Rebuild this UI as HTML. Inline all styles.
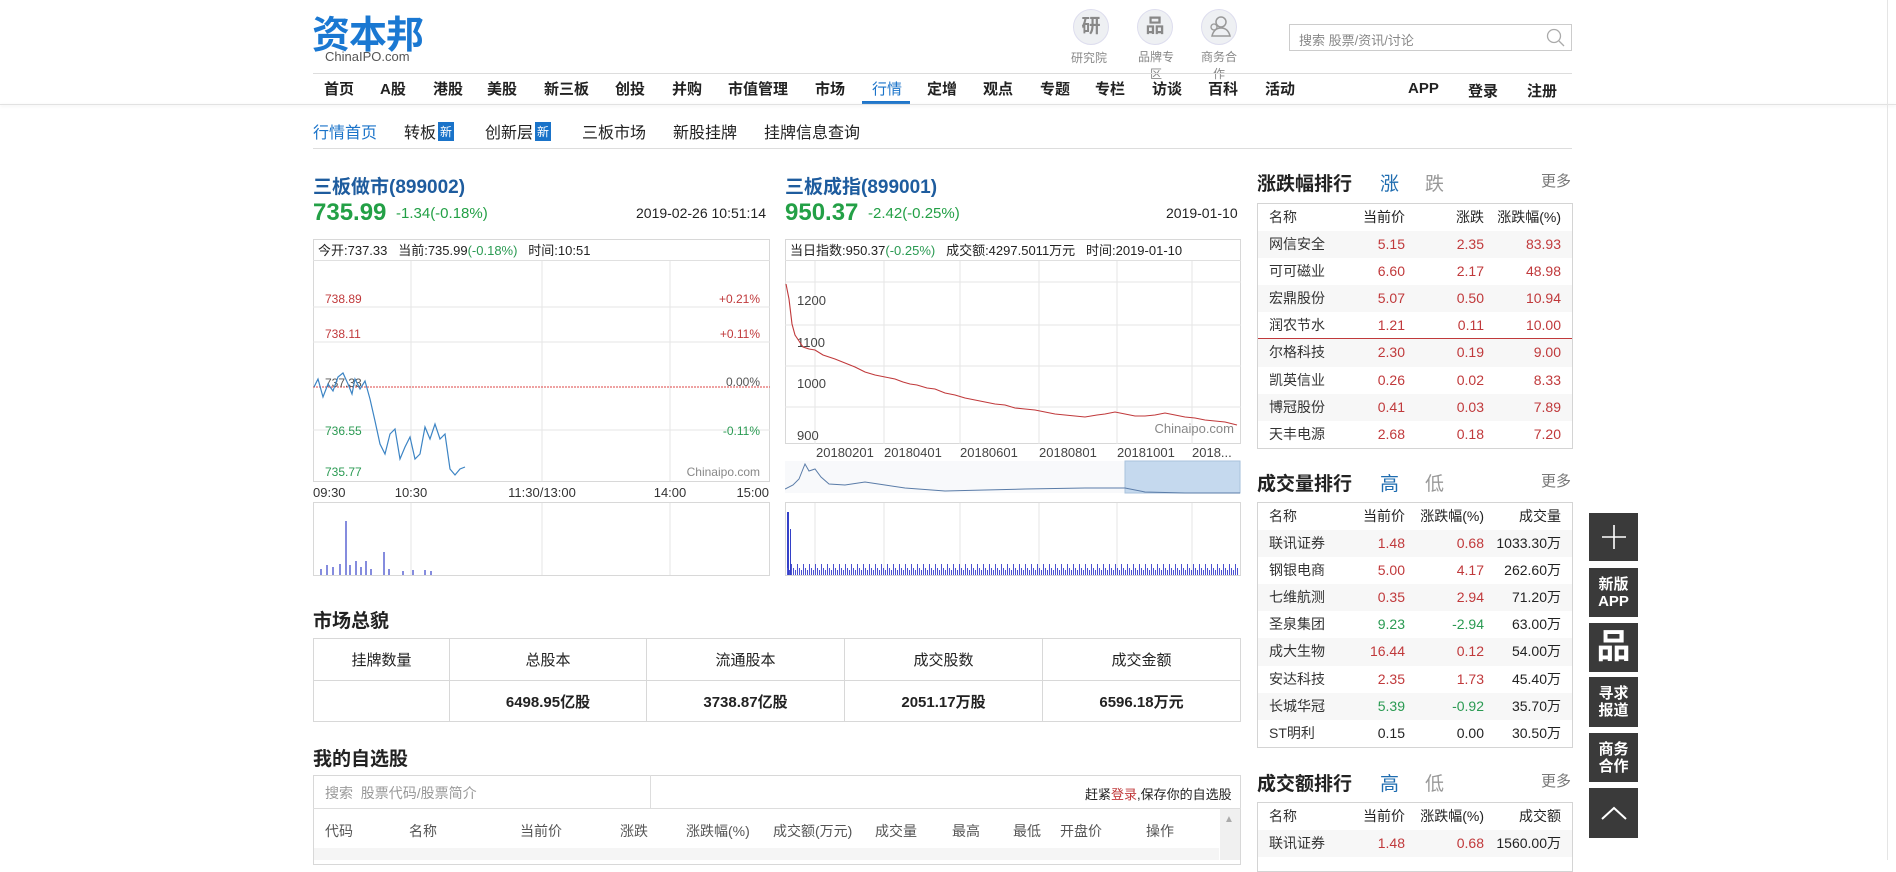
<!DOCTYPE html>
<html><head><meta charset="utf-8">
<style>
*{margin:0;padding:0;box-sizing:border-box}
body{width:1896px;height:860px;overflow:hidden;background:#fff;font-family:"Liberation Sans","Noto Sans CJK SC",sans-serif;color:#222;position:relative}
.a{position:absolute;white-space:nowrap}
.nav span{position:absolute;top:78px;font-size:15px;font-weight:bold;color:#222}
.sub span{position:absolute;top:119px;font-size:16px;color:#222}
.new{display:inline-block;background:#1a73c9;color:#fff;font-size:12px;padding:1px 2px;margin-left:2px;vertical-align:2px}
.box{position:absolute;border:1px solid #d8d8d8}
.rt{position:absolute;left:1257px;width:316px;border:1px solid #d4d4d4;font-size:14px}
.rt .r{height:27.1px;line-height:27px;position:relative}
.rt .r:nth-child(even){background:#f7f7f7}
.rt .r span{position:absolute}
.c1{left:11px;color:#333}.c2{right:167px}.c3{right:88px}.c4{right:11px}
.red{color:#c0393b}.grn{color:#2a9a52}
.rh{position:absolute;left:1257px;font-size:19px;font-weight:bold;color:#222}
.rh i{font-style:normal;font-weight:normal;margin-left:26px;color:#999}
.rh i.on{color:#1e6cb0;margin-left:28px}
.more{position:absolute;left:1541px;font-size:15px;color:#777}
.sb{position:absolute;left:1589px;width:49px;background:#3a3a3a;color:#fff;text-align:center;font-weight:bold;font-size:15px;line-height:17px}
.mt td{border:1px solid #d8d8d8;text-align:center;font-size:15px}
</style></head><body>

<div class="a" style="left:312px;top:4px;font-size:38px;font-weight:bold;color:#1a78d2;letter-spacing:-1px">资本邦</div>
<div class="a" style="left:325px;top:49px;font-size:13px;color:#555">ChinaIPO.com</div>

<div class="a" style="left:1073px;top:9px;width:36px;height:36px;border-radius:50%;background:#eef0f3;border:1px solid #dde;text-align:center;line-height:34px;font-size:19px;color:#888;font-weight:bold">研</div>
<div class="a" style="left:1137px;top:9px;width:36px;height:36px;border-radius:50%;background:#eef0f3;border:1px solid #dde;text-align:center;line-height:34px;font-size:19px;color:#888;font-weight:bold">品</div>
<div class="a" style="left:1201px;top:9px;width:36px;height:36px;border-radius:50%;background:#eef0f3;border:1px solid #dde"><svg width="34" height="34"><circle cx="19" cy="12" r="5" fill="none" stroke="#999" stroke-width="1.5"/><path d="M10 26 q2-8 9-8 q7 0 9 8 z" fill="none" stroke="#999" stroke-width="1.5"/><circle cx="12" cy="17" r="3" fill="none" stroke="#999" stroke-width="1.3"/></svg></div>
<div class="a" style="left:1071px;top:49px;font-size:12px;color:#888">研究院</div>
<div class="a" style="left:1136px;top:49px;font-size:12px;color:#888;width:40px;white-space:normal;line-height:17px;text-align:center">品牌专区</div>
<div class="a" style="left:1199px;top:49px;font-size:12px;color:#888;width:40px;white-space:normal;line-height:17px;text-align:center">商务合作</div>

<div class="a" style="left:1289px;top:24px;width:283px;height:27px;border:1px solid #ccc"></div>
<div class="a" style="left:1299px;top:30px;font-size:13px;color:#888">搜索 股票/资讯/讨论</div>
<svg class="a" style="left:1546px;top:28px" width="20" height="20"><circle cx="8" cy="8" r="6.5" fill="none" stroke="#aaa" stroke-width="1.3"/><line x1="13" y1="13" x2="18" y2="18" stroke="#aaa" stroke-width="1.3"/></svg>

<div class="a" style="left:313px;top:73px;width:1259px;height:1px;background:#ddd"></div>
<div class="nav">
<span style="left:324px">首页</span><span style="left:380px">A股</span><span style="left:433px">港股</span><span style="left:487px">美股</span><span style="left:544px">新三板</span><span style="left:615px">创投</span><span style="left:672px">并购</span><span style="left:728px">市值管理</span><span style="left:815px">市场</span><span style="left:872px;color:#1a73c9;font-weight:normal">行情</span><span style="left:927px">定增</span><span style="left:983px">观点</span><span style="left:1040px">专题</span><span style="left:1095px">专栏</span><span style="left:1152px">访谈</span><span style="left:1208px">百科</span><span style="left:1265px">活动</span>
<span style="left:1408px;top:80px">APP</span><span style="left:1468px;top:80px">登录</span><span style="left:1527px;top:80px">注册</span>
</div>
<div class="a" style="left:862px;top:101px;width:48px;height:3px;background:#1a73c9"></div>
<div class="a" style="left:0;top:104px;width:1896px;height:1px;background:#e2e2e2;box-shadow:0 1px 3px #e6e6e6"></div>

<div class="sub">
<span style="left:313px;color:#1a73c9">行情首页</span><span style="left:404px">转板<i class="new" style="font-style:normal">新</i></span><span style="left:485px">创新层<i class="new" style="font-style:normal">新</i></span><span style="left:582px">三板市场</span><span style="left:673px">新股挂牌</span><span style="left:764px">挂牌信息查询</span>
</div>
<div class="a" style="left:313px;top:148px;width:1259px;height:1px;background:#ddd"></div>

<div class="a" style="left:313px;top:172px;font-size:19px;color:#1e5c9e;font-weight:bold">三板做市(899002)</div>
<div class="a" style="left:313px;top:199px;font-size:24px;color:#23a046;font-weight:bold">735.99</div>
<div class="a" style="left:396px;top:205px;font-size:15px;color:#23a046">-1.34(-0.18%)</div>
<div class="a" style="left:636px;top:205px;font-size:14px;color:#222">2019-02-26 10:51:14</div>

<div class="a" style="left:785px;top:172px;font-size:19px;color:#1e5c9e;font-weight:bold">三板成指(899001)</div>
<div class="a" style="left:785px;top:199px;font-size:24px;color:#23a046;font-weight:bold">950.37</div>
<div class="a" style="left:868px;top:205px;font-size:15px;color:#23a046">-2.42(-0.25%)</div>
<div class="a" style="left:1166px;top:205px;font-size:14px;color:#222">2019-01-10</div>

<svg class="a" style="left:313px;top:239px" width="457" height="337">
<rect x="0.5" y="0.5" width="456" height="242" fill="#fff" stroke="#d8d8d8"/>
<line x1="0" y1="21.5" x2="457" y2="21.5" stroke="#e0e0e0"/>
<g stroke="#e6e6e6"><line x1="0" y1="68" x2="457" y2="68"/><line x1="0" y1="103" x2="457" y2="103"/><line x1="0" y1="191" x2="457" y2="191"/><line x1="98" y1="22" x2="98" y2="242"/><line x1="229" y1="22" x2="229" y2="242"/><line x1="357" y1="22" x2="357" y2="242"/></g>
<line x1="0" y1="148" x2="457" y2="148" stroke="#d44" stroke-dasharray="2,1"/>
<g font-size="12" font-family="Liberation Sans,sans-serif">
<text x="12" y="64" fill="#c0393b">738.89</text><text x="12" y="99" fill="#c0393b">738.11</text><text x="12" y="148" fill="#555">737.33</text><text x="12" y="196" fill="#2a9a52">736.55</text><text x="12" y="237" fill="#2a9a52">735.77</text>
<text x="447" y="64" fill="#c0393b" text-anchor="end">+0.21%</text><text x="447" y="99" fill="#c0393b" text-anchor="end">+0.11%</text><text x="447" y="147" fill="#555" text-anchor="end">0.00%</text><text x="447" y="196" fill="#2a9a52" text-anchor="end">-0.11%</text><text x="447" y="237" fill="#888" text-anchor="end">Chinaipo.com</text>
</g>
<text x="5" y="16" font-size="13" fill="#222" font-family="Liberation Sans,Noto Sans CJK SC,sans-serif">今开:737.33 &#160; 当前:735.99<tspan fill="#2a9a52">(-0.18%)</tspan> &#160; 时间:10:51</text>
<polyline fill="none" stroke="#3c84c4" stroke-width="1.2" points="1,148 5,140 10,158 15,145 20,152 25,138 30,134 35,145 39,155 42,140 47,150 52,142 57,160 62,182 67,205 72,215 77,195 82,190 87,220 92,208 97,198 102,220 107,215 112,188 117,200 122,185 127,200 132,195 137,230 142,236 147,230 152,228"/>
<g font-size="13" fill="#333" font-family="Liberation Sans,sans-serif"><text x="0" y="258">09:30</text><text x="98" y="258" text-anchor="middle">10:30</text><text x="229" y="258" text-anchor="middle">11:30/13:00</text><text x="357" y="258" text-anchor="middle">14:00</text><text x="456" y="258" text-anchor="end">15:00</text></g>
<rect x="0.5" y="263.5" width="456" height="73" fill="#fff" stroke="#d8d8d8"/>
<g stroke="#e6e6e6"><line x1="98" y1="264" x2="98" y2="336"/><line x1="229" y1="264" x2="229" y2="336"/><line x1="357" y1="264" x2="357" y2="336"/></g>
<g stroke="#3340c8" stroke-width="1.2"><line x1="8" y1="336" x2="8" y2="330"/><line x1="14" y1="336" x2="14" y2="326"/><line x1="20" y1="336" x2="20" y2="328"/><line x1="27" y1="336" x2="27" y2="325"/><line x1="33" y1="336" x2="33" y2="282"/><line x1="37" y1="336" x2="37" y2="326"/><line x1="43" y1="336" x2="43" y2="322"/><line x1="48" y1="336" x2="48" y2="328"/><line x1="53" y1="336" x2="53" y2="322"/><line x1="58" y1="336" x2="58" y2="330"/><line x1="71" y1="336" x2="71" y2="313"/><line x1="76" y1="336" x2="76" y2="330"/><line x1="90" y1="336" x2="90" y2="332"/><line x1="100" y1="336" x2="100" y2="331"/><line x1="112" y1="336" x2="112" y2="331"/><line x1="118" y1="336" x2="118" y2="332"/></g>
</svg>

<svg class="a" style="left:785px;top:239px" width="456" height="337">
<defs><pattern id="vb" width="6" height="14" patternUnits="userSpaceOnUse"><rect x="0" y="3" width="1" height="11" fill="#4a50d0"/><rect x="2" y="7" width="1" height="7" fill="#4a50d0"/><rect x="4" y="9" width="1" height="5" fill="#4a50d0"/></pattern></defs>
<rect x="0.5" y="0.5" width="455" height="204" fill="#fff" stroke="#d8d8d8"/>
<line x1="0" y1="21.5" x2="456" y2="21.5" stroke="#e0e0e0"/>
<g stroke="#e6e6e6"><line x1="0" y1="43" x2="456" y2="43"/><line x1="0" y1="86" x2="456" y2="86"/><line x1="0" y1="127" x2="456" y2="127"/><line x1="0" y1="168" x2="456" y2="168"/><line x1="30" y1="22" x2="30" y2="205"/><line x1="99" y1="22" x2="99" y2="205"/><line x1="175" y1="22" x2="175" y2="205"/><line x1="254" y1="22" x2="254" y2="205"/><line x1="332" y1="22" x2="332" y2="205"/><line x1="407" y1="22" x2="407" y2="205"/></g>
<text x="5" y="16" font-size="13" fill="#222" font-family="Liberation Sans,Noto Sans CJK SC,sans-serif">当日指数:950.37<tspan fill="#2a9a52">(-0.25%)</tspan> &#160; 成交额:4297.5011万元 &#160; 时间:2019-01-10</text>
<g font-size="13" fill="#444" font-family="Liberation Sans,sans-serif"><text x="12" y="66">1200</text><text x="12" y="108">1100</text><text x="12" y="149">1000</text><text x="12" y="201">900</text><text x="449" y="194" text-anchor="end" fill="#888">Chinaipo.com</text></g>
<polyline fill="none" stroke="#c0393b" stroke-width="1.1" points="1,45 4,60 7,85 10,96 14,102 18,108 24,110 30,111 38,116 50,120 60,124 70,128 80,133 90,136 100,138 110,140 118,143 125,145 132,146 142,149 150,150 160,154 170,156 180,159 190,161 200,163 210,165 220,166 230,169 240,170 250,171 260,173 270,175 280,176 290,177 300,178 312,176 320,175 330,173 340,175 350,177 360,177 370,176 380,174 390,176 400,178 410,179 420,181 430,182 440,183 452,186"/>
<g font-size="13" fill="#444" font-family="Liberation Sans,sans-serif"><text x="31" y="218">20180201</text><text x="99" y="218">20180401</text><text x="175" y="218">20180601</text><text x="254" y="218">20180801</text><text x="332" y="218">20181001</text><text x="407" y="218">2018...</text></g>
<rect x="0" y="222" width="456" height="32" fill="#f8f9fb"/>
<rect x="340" y="222" width="115" height="32" fill="#c5d9ee" stroke="#a9c2dc"/>
<polyline fill="none" stroke="#5a7ca8" stroke-width="1" points="0,250 8,246 14,240 20,225 24,232 30,230 36,238 44,245 60,246 80,243 100,246 120,249 160,252 200,251 240,250 300,249 340,249 360,253 400,254 455,254"/>
<rect x="0.5" y="263.5" width="455" height="73" fill="#fff" stroke="#d8d8d8"/>
<g stroke="#e6e6e6"><line x1="30" y1="264" x2="30" y2="336"/><line x1="99" y1="264" x2="99" y2="336"/><line x1="175" y1="264" x2="175" y2="336"/><line x1="254" y1="264" x2="254" y2="336"/><line x1="332" y1="264" x2="332" y2="336"/><line x1="407" y1="264" x2="407" y2="336"/></g>
<rect x="2" y="273" width="2" height="63" fill="#3340c8"/><rect x="5" y="290" width="1" height="46" fill="#3340c8"/>
<rect x="2" y="322" width="452" height="14" fill="url(#vb)"/>
</svg>

<div class="a" style="left:313px;top:606px;font-size:19px;font-weight:bold">市场总貌</div>
<table class="a mt" style="left:313px;top:638px;width:928px;height:84px;border-collapse:collapse">
<tr style="height:42px"><td style="width:136px">挂牌数量</td><td style="width:197px">总股本</td><td style="width:198px">流通股本</td><td style="width:198px">成交股数</td><td>成交金额</td></tr>
<tr style="font-weight:bold"><td></td><td>6498.95亿股</td><td>3738.87亿股</td><td>2051.17万股</td><td>6596.18万元</td></tr>
</table>

<div class="a" style="left:313px;top:744px;font-size:19px;font-weight:bold">我的自选股</div>
<div class="box" style="left:313px;top:775px;width:928px;height:90px"></div>
<div class="a" style="left:313px;top:808px;width:928px;height:1px;background:#ddd"></div>
<div class="a" style="left:650px;top:775px;width:1px;height:33px;background:#ddd"></div>
<div class="a" style="left:325px;top:783px;font-size:14px;color:#999">搜索 &#160;股票代码/股票简介</div>
<div class="a" style="left:1085px;top:784px;font-size:13px;color:#222">赶紧<span style="color:#c0393b">登录</span>,保存你的自选股</div>
<div class="a" style="left:1220px;top:809px;width:20px;height:51px;background:#f0f0f0"></div>
<div class="a" style="left:1224px;top:814px;font-size:10px;color:#aaa">▲</div>
<div class="a" style="left:313px;top:821px;font-size:14px;color:#555;width:900px">
<span class="a" style="left:12px">代码</span><span class="a" style="left:96px">名称</span><span class="a" style="left:207px">当前价</span><span class="a" style="left:307px">涨跌</span><span class="a" style="left:373px">涨跌幅(%)</span><span class="a" style="left:460px">成交额(万元)</span><span class="a" style="left:562px">成交量</span><span class="a" style="left:639px">最高</span><span class="a" style="left:700px">最低</span><span class="a" style="left:747px">开盘价</span><span class="a" style="left:833px">操作</span></div>
<div class="a" style="left:314px;top:848px;width:905px;height:12px;background:#f5f5f5"></div>

<div class="rh" style="top:169px">涨跌幅排行<i class="on">涨</i><i>跌</i></div>
<div class="more" style="top:170px">更多</div>
<div class="rt" style="top:203px">
<div class="r"><span class="c1">名称</span><span class="c2">当前价</span><span class="c3">涨跌</span><span class="c4">涨跌幅(%)</span></div>
<div class="r"><span class="c1">网信安全</span><span class="c2 red">5.15</span><span class="c3 red">2.35</span><span class="c4 red">83.93</span></div>
<div class="r"><span class="c1">可可磁业</span><span class="c2 red">6.60</span><span class="c3 red">2.17</span><span class="c4 red">48.98</span></div>
<div class="r"><span class="c1">宏鼎股份</span><span class="c2 red">5.07</span><span class="c3 red">0.50</span><span class="c4 red">10.94</span></div>
<div class="r" style="border-bottom:1px solid #c0393b"><span class="c1">润农节水</span><span class="c2 red">1.21</span><span class="c3 red">0.11</span><span class="c4 red">10.00</span></div>
<div class="r"><span class="c1">尔格科技</span><span class="c2 red">2.30</span><span class="c3 red">0.19</span><span class="c4 red">9.00</span></div>
<div class="r"><span class="c1">凯英信业</span><span class="c2 red">0.26</span><span class="c3 red">0.02</span><span class="c4 red">8.33</span></div>
<div class="r"><span class="c1">博冠股份</span><span class="c2 red">0.41</span><span class="c3 red">0.03</span><span class="c4 red">7.89</span></div>
<div class="r"><span class="c1">天丰电源</span><span class="c2 red">2.68</span><span class="c3 red">0.18</span><span class="c4 red">7.20</span></div>
</div>

<div class="rh" style="top:469px">成交量排行<i class="on">高</i><i>低</i></div>
<div class="more" style="top:470px">更多</div>
<div class="rt" style="top:502px">
<div class="r"><span class="c1">名称</span><span class="c2">当前价</span><span class="c3">涨跌幅(%)</span><span class="c4">成交量</span></div>
<div class="r"><span class="c1">联讯证券</span><span class="c2 red">1.48</span><span class="c3 red">0.68</span><span class="c4">1033.30万</span></div>
<div class="r"><span class="c1">钢银电商</span><span class="c2 red">5.00</span><span class="c3 red">4.17</span><span class="c4">262.60万</span></div>
<div class="r"><span class="c1">七维航测</span><span class="c2 red">0.35</span><span class="c3 red">2.94</span><span class="c4">71.20万</span></div>
<div class="r"><span class="c1">圣泉集团</span><span class="c2 grn">9.23</span><span class="c3 grn">-2.94</span><span class="c4">63.00万</span></div>
<div class="r"><span class="c1">成大生物</span><span class="c2 red">16.44</span><span class="c3 red">0.12</span><span class="c4">54.00万</span></div>
<div class="r"><span class="c1">安达科技</span><span class="c2 red">2.35</span><span class="c3 red">1.73</span><span class="c4">45.40万</span></div>
<div class="r"><span class="c1">长城华冠</span><span class="c2 grn">5.39</span><span class="c3 grn">-0.92</span><span class="c4">35.70万</span></div>
<div class="r"><span class="c1">ST明利</span><span class="c2">0.15</span><span class="c3">0.00</span><span class="c4">30.50万</span></div>
</div>

<div class="rh" style="top:769px">成交额排行<i class="on">高</i><i>低</i></div>
<div class="more" style="top:770px">更多</div>
<div class="rt" style="top:802px;height:70px">
<div class="r"><span class="c1">名称</span><span class="c2">当前价</span><span class="c3">涨跌幅(%)</span><span class="c4">成交额</span></div>
<div class="r"><span class="c1">联讯证券</span><span class="c2 red">1.48</span><span class="c3 red">0.68</span><span class="c4">1560.00万</span></div>
</div>

<div class="sb" style="top:513px;height:48px"><svg width="30" height="30" style="margin-top:9px"><line x1="15" y1="3" x2="15" y2="27" stroke="#fff" stroke-width="1.6"/><line x1="3" y1="15" x2="27" y2="15" stroke="#fff" stroke-width="1.6"/></svg></div>
<div class="sb" style="top:568px;height:49px;padding-top:8px">新版<br>APP</div>
<div class="sb" style="top:623px;height:49px;font-size:34px;line-height:48px">品</div>
<div class="sb" style="top:677px;height:50px;padding-top:8px">寻求<br>报道</div>
<div class="sb" style="top:733px;height:49px;padding-top:8px">商务<br>合作</div>
<div class="sb" style="top:788px;height:50px"><svg width="30" height="20" style="margin-top:16px"><polyline points="3,15 15,4 27,15" fill="none" stroke="#fff" stroke-width="2"/></svg></div>

<div class="a" style="left:1887px;top:0;width:1px;height:860px;background:#e5e5e5"></div>
</body></html>
